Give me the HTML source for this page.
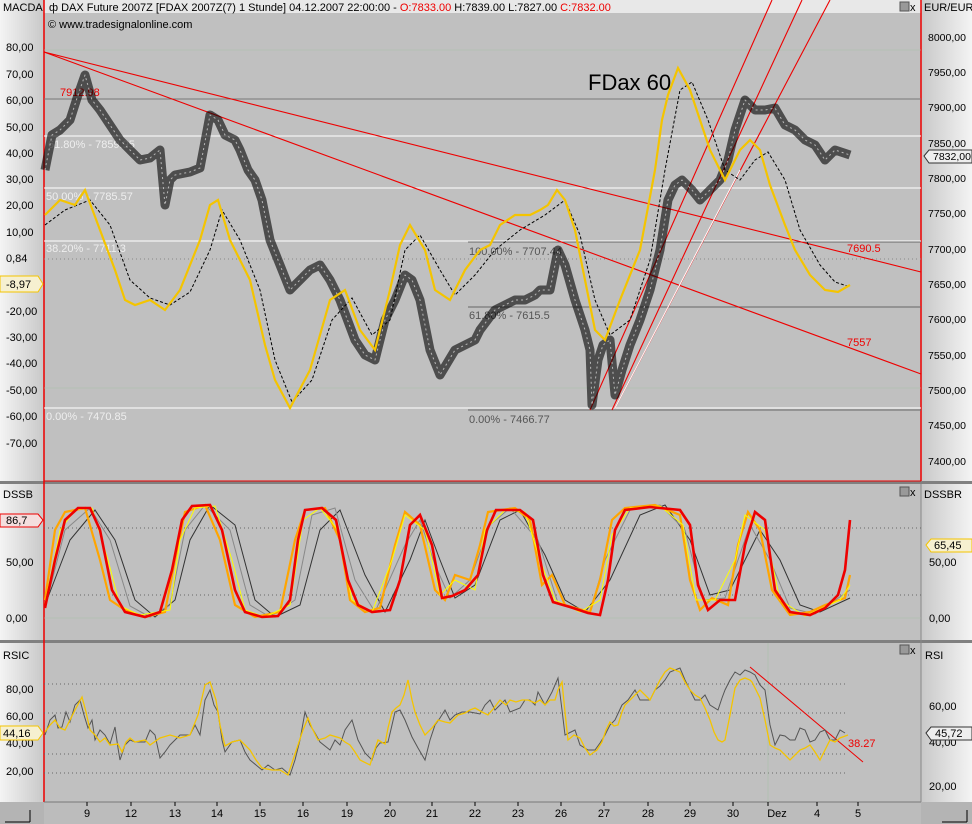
<!DOCTYPE html>
<html><head><meta charset="utf-8"><style>
html,body{margin:0;padding:0;width:972px;height:824px;overflow:hidden;background:#c0c0c0;font-family:"Liberation Sans",sans-serif}
svg{display:block}
text{font-family:"Liberation Sans",sans-serif;font-size:11px}
.r text{font-size:10.5px}
</style></head><body>
<svg width="972" height="824" viewBox="0 0 972 824" xmlns="http://www.w3.org/2000/svg">
<defs>
<linearGradient id="lg" x1="0" x2="1"><stop offset="0" stop-color="#f4f4f4"/><stop offset="1" stop-color="#c8c8c8"/></linearGradient>
<linearGradient id="rg" x1="0" x2="1"><stop offset="0" stop-color="#c8c8c8"/><stop offset="1" stop-color="#f4f4f4"/></linearGradient>
</defs>
<rect width="972" height="824" fill="#c0c0c0"/>
<rect x="0" y="0" width="44" height="802" fill="url(#lg)"/>
<rect x="921" y="0" width="51" height="802" fill="url(#rg)"/>
<rect x="0" y="802" width="972" height="22" fill="#b4b4b4"/>
<rect x="44" y="802" width="877" height="22" fill="#bcbcbc"/>
<rect x="44" y="0" width="877" height="13" fill="#e8e8e8"/>
<text x="3" y="11">MACDA</text>
<text x="49" y="11">ф DAX Future 2007Z [FDAX 2007Z(7)  1 Stunde] 04.12.2007 22:00:00 - <tspan fill="#e00">O:7833.00</tspan> H:7839.00 L:7827.00 <tspan fill="#e00">C:7832.00</tspan></text>
<text x="48" y="28">© www.tradesignalonline.com</text>
<text x="924" y="11">EUR/EUR</text>
<rect x="0" y="481" width="972" height="3" fill="#808080"/>
<rect x="0" y="640" width="972" height="3" fill="#808080"/>
<line x1="44" y1="0" x2="44" y2="802" stroke="#e00" stroke-width="1.5"/>
<line x1="921" y1="0" x2="921" y2="481" stroke="#e00" stroke-width="1.5"/>
<line x1="44" y1="481" x2="921" y2="481" stroke="#e00"/>
<line x1="44" y1="802" x2="921" y2="802" stroke="#777"/>
<line x1="921" y1="484" x2="921" y2="802" stroke="#888"/>

<line x1="44" y1="99" x2="921" y2="99" stroke="#777"/>
<line x1="44" y1="136" x2="921" y2="136" stroke="#fff"/>
<line x1="44" y1="188" x2="921" y2="188" stroke="#fff"/>
<line x1="44" y1="241" x2="921" y2="241" stroke="#fff"/>
<line x1="468" y1="242" x2="921" y2="242" stroke="#666"/>
<line x1="468" y1="307" x2="921" y2="307" stroke="#666"/>
<line x1="44" y1="408" x2="921" y2="408" stroke="#fff"/>
<line x1="468" y1="410" x2="921" y2="410" stroke="#666"/>
<line x1="44" y1="259" x2="921" y2="259" stroke="#888" stroke-dasharray="1,3"/>
<line x1="44" y1="50" x2="921" y2="50" stroke="#a8c0a8" stroke-width=".6"/>
<line x1="44" y1="388" x2="921" y2="388" stroke="#a8c0a8" stroke-width=".6"/>
<text x="60" y="96" fill="#e00">7912.98</text>
<text x="48" y="148" fill="#eee">61.80% - 7859.95</text>
<text x="46" y="200" fill="#eee">50.00% - 7785.57</text>
<text x="46" y="252" fill="#eee">38.20% - 7711.3</text>
<text x="46" y="420" fill="#eee">0.00% - 7470.85</text>
<text x="469" y="255" fill="#555">100.00% - 7707.44</text>
<text x="469" y="319" fill="#555">61.80% - 7615.5</text>
<text x="469" y="423" fill="#555">0.00% - 7466.77</text>
<text x="847" y="252" fill="#e00">7690.5</text>
<text x="847" y="346" fill="#e00">7557</text>
<text x="588" y="90" style="font-family:'Liberation Sans',sans-serif;font-size:22px">FDax 60</text>
<g stroke="#e00" stroke-width="1.1" fill="none">
<line x1="44" y1="52" x2="921" y2="272"/>
<line x1="44" y1="52" x2="921" y2="374"/>
<line x1="590" y1="410" x2="772" y2="0"/>
<line x1="612" y1="410" x2="802" y2="0"/>
<line x1="615" y1="408" x2="830" y2="0"/>
</g>
<line x1="615" y1="408" x2="740" y2="170" stroke="#fff"/>
<g fill="none" stroke-linejoin="round">
<polyline id="pr" stroke="#000" stroke-opacity=".6" stroke-width="9" points="45,170 52,135 60,130 70,120 78,95 85,75 92,100 100,110 110,125 120,140 130,150 140,160 150,158 160,150 165,205 170,180 175,175 190,172 200,168 210,115 218,120 225,135 235,140 240,150 248,170 255,180 262,200 270,240 280,265 290,290 300,280 310,270 320,265 330,280 340,300 355,340 365,355 375,360 385,320 395,300 405,275 412,280 420,300 430,350 440,375 455,350 465,345 475,340 480,330 495,310 505,305 515,300 525,300 535,295 540,290 550,290 558,250 565,265 575,300 585,330 590,350 592,405 598,360 603,345 610,340 615,395 622,370 630,345 640,320 650,290 660,250 668,200 675,185 682,180 692,190 700,200 710,190 720,180 728,160 735,130 745,100 755,110 765,110 775,108 785,125 795,130 805,140 815,145 825,160 835,150 850,155"/>
<polyline stroke="#fff" stroke-opacity=".6" stroke-width="1" stroke-dasharray="2,3" points="45,170 52,135 60,130 70,120 78,95 85,75 92,100 100,110 110,125 120,140 130,150 140,160 150,158 160,150 165,205 170,180 175,175 190,172 200,168 210,115 218,120 225,135 235,140 240,150 248,170 255,180 262,200 270,240 280,265 290,290 300,280 310,270 320,265 330,280 340,300 355,340 365,355 375,360 385,320 395,300 405,275 412,280 420,300 430,350 440,375 455,350 465,345 475,340 480,330 495,310 505,305 515,300 525,300 535,295 540,290 550,290 558,250 565,265 575,300 585,330 590,350 592,405 598,360 603,345 610,340 615,395 622,370 630,345 640,320 650,290 660,250 668,200 675,185 682,180 692,190 700,200 710,190 720,180 728,160 735,130 745,100 755,110 765,110 775,108 785,125 795,130 805,140 815,145 825,160 835,150 850,155"/>
</g>
<polyline fill="none" stroke="#000" stroke-dasharray="3,2" points="45,225 65,210 90,200 110,225 130,280 150,298 170,305 190,292 210,250 222,210 240,240 260,290 275,360 292,402 312,380 332,320 352,298 372,335 390,320 405,250 420,235 440,270 455,295 475,275 495,250 520,230 545,215 565,200 580,235 595,300 610,335 630,320 650,260 665,170 680,90 692,82 708,120 725,170 740,180 755,160 768,152 785,180 800,230 820,265 835,282 850,287"/>
<polyline fill="none" stroke="#f4c400" stroke-width="2.2" points="45,215 60,200 75,205 85,190 100,230 115,270 125,300 135,305 150,300 165,310 180,290 200,240 210,205 218,200 230,240 250,280 265,345 275,380 290,408 310,370 330,300 345,290 360,330 375,350 390,290 400,245 410,225 425,250 435,290 450,300 465,270 480,250 490,245 500,225 515,215 530,215 540,210 548,205 557,190 565,200 575,230 585,280 595,330 605,340 620,300 640,250 655,170 662,120 668,95 678,68 690,90 700,120 710,150 725,180 740,150 750,140 760,150 770,185 785,225 795,250 810,275 825,290 838,292 850,285"/>
<g fill="#000">
<text x="6" y="51">80,00</text><text x="6" y="78">70,00</text><text x="6" y="104">60,00</text><text x="6" y="131">50,00</text><text x="6" y="157">40,00</text><text x="6" y="183">30,00</text><text x="6" y="209">20,00</text><text x="6" y="236">10,00</text><text x="6" y="262">0,84</text><text x="6" y="315">-20,00</text><text x="6" y="341">-30,00</text><text x="6" y="367">-40,00</text><text x="6" y="394">-50,00</text><text x="6" y="420">-60,00</text><text x="6" y="447">-70,00</text>
</g>
<path d="M0,276 H38 L43,284 L38,292 H0Z" fill="#f6f0d0" stroke="#f4c400"/>
<text x="6" y="288">-8,97</text>
<g fill="#000" class="r">
<text x="928" y="41">8000,00</text><text x="928" y="76">7950,00</text><text x="928" y="111">7900,00</text><text x="928" y="147">7850,00</text><text x="928" y="182">7800,00</text><text x="928" y="217">7750,00</text><text x="928" y="253">7700,00</text><text x="928" y="288">7650,00</text><text x="928" y="323">7600,00</text><text x="928" y="359">7550,00</text><text x="928" y="394">7500,00</text><text x="928" y="429">7450,00</text><text x="928" y="465">7400,00</text>
<path d="M924,156 L929,150 H972 V163 H929Z" fill="#eee" stroke="#333"/>
<text x="933" y="160">7832,00</text>
</g>
<rect x="900" y="2" width="9" height="9" fill="#999" stroke="#555"/><text x="910" y="11" font-size="10">x</text>

<text x="3" y="498">DSSB</text><text x="924" y="498">DSSBR</text>
<line x1="44" y1="528" x2="921" y2="528" stroke="#666" stroke-dasharray="1,3"/>
<line x1="44" y1="595" x2="921" y2="595" stroke="#666" stroke-dasharray="1,3"/>
<line x1="44" y1="618" x2="921" y2="618" stroke="#a8c0a8" stroke-width=".6"/>
<text x="6" y="566">50,00</text><text x="6" y="622">0,00</text>
<text x="929" y="566">50,00</text><text x="929" y="622">0,00</text>
<path d="M0,514 H38 L43,520 L38,527 H0Z" fill="#f4dede" stroke="#e00"/><text x="6" y="524">86,7</text>
<path d="M926,545 L931,539 H972 V552 H931Z" fill="#f6f0d0" stroke="#f4c400"/><text x="934" y="549">65,45</text>
<polyline fill="none" stroke="#333" stroke-width="1" points="45,605 70,540 95,510 115,540 135,600 155,617 175,600 190,540 210,505 235,525 255,600 275,617 300,605 320,530 340,510 365,575 385,612 410,560 425,520 440,560 455,598 475,585 500,520 520,510 545,555 565,600 585,612 610,580 640,515 665,505 690,540 710,595 730,590 760,530 780,560 800,605 820,612 850,598"/>
<polyline fill="none" stroke="#888" stroke-width="1" points="45,608 65,530 90,508 110,540 130,606 150,617 170,605 185,530 205,505 230,530 250,605 270,617 295,600 312,515 335,508 355,580 375,612 405,545 420,520 435,565 450,598 470,580 490,525 510,508 538,540 558,603 590,612 605,560 630,510 660,505 685,530 703,600 725,598 750,525 770,560 790,608 815,614 850,590"/>
<polyline fill="none" stroke="#ffa500" stroke-width="2.2" points="45,600 55,530 65,512 85,508 100,560 110,600 125,610 145,617 165,612 175,560 185,512 205,505 220,540 235,605 255,617 280,612 295,540 305,510 325,508 340,540 350,600 365,612 380,608 395,545 405,512 420,525 435,590 445,600 455,575 470,580 480,545 488,512 515,508 530,520 542,585 552,575 565,605 590,612 600,580 612,520 625,508 655,505 680,515 690,580 700,610 712,598 728,605 738,545 748,512 760,530 772,590 790,615 810,612 825,605 845,598 850,575"/>
<polyline fill="none" stroke="#ff0" stroke-width="1" points="45,604 60,530 75,510 92,508 108,560 120,606 140,615 170,610 180,540 195,508 215,506 232,560 245,610 265,617 290,605 303,520 320,508 338,530 352,600 372,612 392,560 405,515 425,530 440,595 455,580 475,590 485,530 505,510 525,512 540,560 555,600 580,612 600,600 612,535 630,508 660,506 683,525 696,600 715,600 735,560 745,515 765,530 780,600 805,616 840,600 850,585"/>
<polyline fill="none" stroke="#e00" stroke-width="2.6" points="45,608 55,560 65,520 78,508 90,508 100,530 112,590 125,612 145,617 160,612 172,570 182,520 192,506 210,505 222,530 235,590 245,612 262,617 278,616 290,600 298,540 305,510 322,508 336,520 348,580 358,605 372,612 390,610 400,580 410,525 420,515 432,545 442,598 452,596 465,590 478,575 487,530 496,510 520,510 533,520 543,575 553,602 570,607 588,613 600,615 608,580 615,530 625,510 650,507 680,510 690,525 698,585 708,610 720,600 735,600 745,545 755,512 765,520 775,590 790,612 810,615 825,608 838,595 845,570 850,520"/>
<rect x="900" y="487" width="9" height="9" fill="#999" stroke="#555"/><text x="910" y="496" font-size="10">x</text>

<text x="3" y="659">RSIC</text><text x="925" y="659">RSI</text>
<line x1="44" y1="684" x2="848" y2="684" stroke="#666" stroke-dasharray="1,3"/>
<line x1="44" y1="713" x2="848" y2="713" stroke="#666" stroke-dasharray="1,3"/>
<line x1="44" y1="754" x2="848" y2="754" stroke="#666" stroke-dasharray="1,3"/>
<line x1="44" y1="773" x2="848" y2="773" stroke="#666" stroke-dasharray="1,3"/>
<line x1="768" y1="643" x2="768" y2="802" stroke="#a8c0a8" stroke-width=".6"/>
<text x="6" y="693">80,00</text><text x="6" y="720">60,00</text><text x="6" y="747">40,00</text><text x="6" y="775">20,00</text>
<text x="929" y="710">60,00</text><text x="929" y="746">40,00</text><text x="929" y="790">20,00</text>
<path d="M0,726 H38 L43,733 L38,740 H0Z" fill="#f6f0d0" stroke="#f4c400"/><text x="3" y="737">44,16</text>
<path d="M926,733 L931,727 H972 V740 H931Z" fill="#eee" stroke="#333"/><text x="935" y="737">45,72</text>
<text x="848" y="747" fill="#e00">38.27</text>
<line x1="750" y1="667" x2="863" y2="762" stroke="#e00"/>
<polyline fill="none" stroke="#555" stroke-width="1" points="45,735 50,720 55,715 58,728 62,727 66,712 70,722 75,705 80,700 84,715 88,728 92,720 95,740 100,730 105,735 110,744 115,727 118,748 120,760 125,745 130,740 135,742 145,742 150,730 155,735 160,758 165,752 170,745 175,740 180,735 190,735 195,725 200,735 205,700 210,690 214,705 218,712 222,740 225,752 232,742 240,740 245,752 250,760 256,765 262,770 268,765 275,770 282,768 290,775 295,760 300,740 305,712 310,725 315,733 320,742 330,750 335,740 340,745 345,730 352,720 358,740 365,753 372,760 376,748 380,743 388,742 392,725 395,712 400,710 405,720 412,737 418,748 425,760 430,740 435,725 440,718 445,710 450,720 455,715 462,712 470,712 480,714 485,705 490,700 495,710 505,700 510,712 520,708 525,700 530,700 535,705 538,692 545,705 552,692 558,678 562,710 565,735 575,730 580,745 588,750 595,750 600,743 605,735 610,725 615,720 622,705 628,700 635,690 640,700 650,700 655,690 660,686 665,680 670,672 675,670 680,668 685,680 690,690 695,700 700,700 705,695 710,705 718,710 722,698 725,690 730,680 735,672 740,675 745,670 750,672 755,675 760,685 765,690 770,725 775,745 780,735 785,736 790,740 795,740 800,728 805,730 810,742 815,740 820,732 825,730 830,740 835,740 840,730 845,733"/>
<polyline fill="none" stroke="#f4c400" stroke-width="1.3" points="45,732 50,725 55,720 60,728 65,730 70,720 75,710 82,697 86,712 90,730 95,735 100,742 105,738 110,745 118,744 122,752 126,742 130,738 135,742 145,740 150,745 160,738 170,735 180,738 190,735 198,715 205,685 210,682 216,700 220,725 225,746 232,742 240,740 245,745 250,750 256,760 262,768 272,770 280,770 288,775 293,760 298,745 303,730 308,718 312,728 318,740 325,738 330,735 340,738 345,742 350,745 355,752 360,760 370,765 374,752 378,740 385,744 388,728 392,712 396,708 400,705 404,695 408,680 412,700 415,712 420,725 425,735 432,728 438,720 445,722 450,723 458,715 465,713 470,710 475,708 482,712 488,715 494,708 500,700 506,705 510,700 516,702 522,700 528,700 535,703 540,700 545,705 550,700 555,700 558,690 562,682 565,712 568,740 574,735 580,738 585,748 590,755 594,752 597,750 602,742 606,730 610,722 614,726 618,725 622,712 625,705 632,698 640,690 645,695 650,700 655,690 660,680 665,672 670,668 675,670 680,672 685,682 690,690 695,695 700,698 705,708 710,720 714,732 718,740 722,742 725,740 730,715 735,688 740,680 745,678 750,680 752,682 756,690 760,698 765,720 770,745 775,748 780,750 785,755 790,760 795,755 800,750 805,748 810,745 815,752 820,760 825,750 830,740 835,742 840,738 848,735"/>
<rect x="900" y="645" width="9" height="9" fill="#999" stroke="#555"/><text x="910" y="654" font-size="10">x</text>

<g fill="#000" text-anchor="middle">
<text x="87" y="817">9</text><text x="131" y="817">12</text><text x="175" y="817">13</text><text x="217" y="817">14</text><text x="260" y="817">15</text><text x="303" y="817">16</text><text x="347" y="817">19</text><text x="390" y="817">20</text><text x="432" y="817">21</text><text x="475" y="817">22</text><text x="518" y="817">23</text><text x="561" y="817">26</text><text x="604" y="817">27</text><text x="648" y="817">28</text><text x="690" y="817">29</text><text x="733" y="817">30</text><text x="777" y="817">Dez</text><text x="817" y="817">4</text><text x="858" y="817">5</text>
</g>
<g stroke="#000"><path d="M87,802 v4 M131,802 v4 M175,802 v4 M217,802 v4 M260,802 v4 M303,802 v4 M347,802 v4 M390,802 v4 M432,802 v4 M475,802 v4 M518,802 v4 M561,802 v4 M604,802 v4 M648,802 v4 M690,802 v4 M733,802 v4 M768,802 v4 M817,802 v4 M858,802 v4"/>
<path d="M5,822 h25 M30,822 v-12" fill="none"/><path d="M942,822 h25 M967,822 v-12" fill="none"/></g>
</svg>
</body></html>
